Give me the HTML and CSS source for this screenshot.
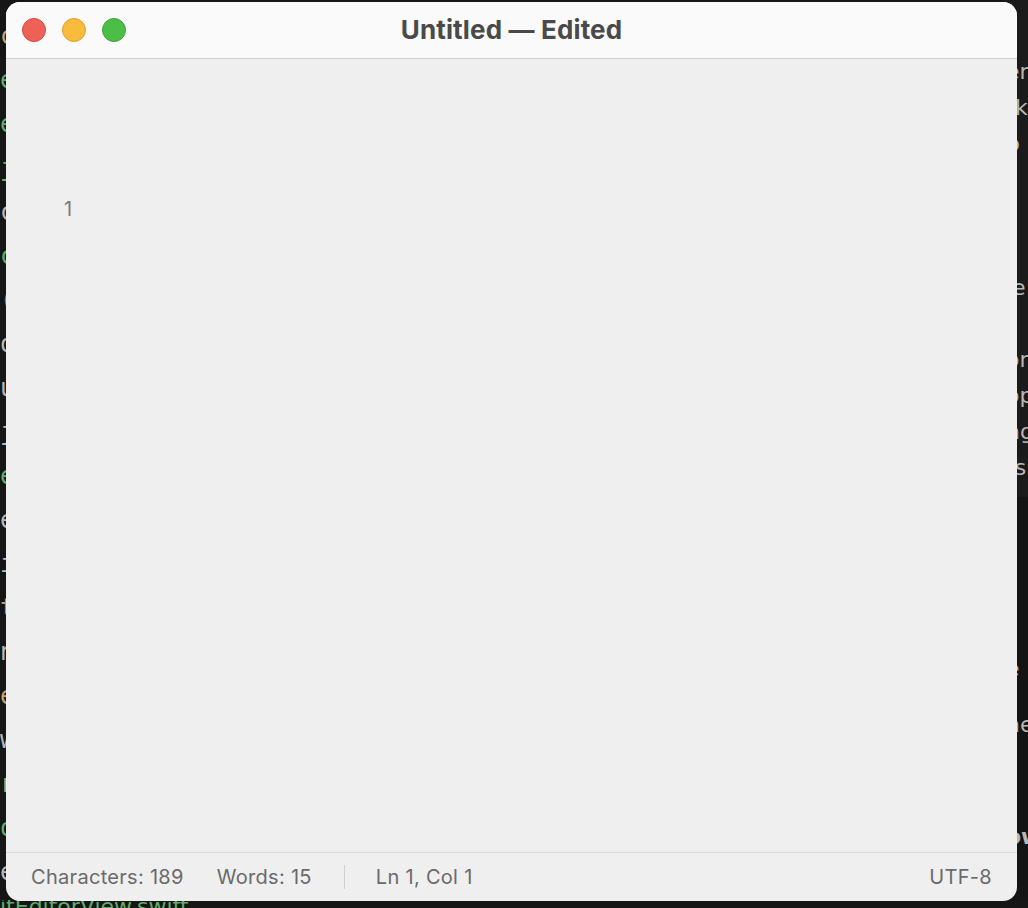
FILE: index.html
```html
<!DOCTYPE html>
<html>
<head>
<meta charset="utf-8">
<title>Untitled — Edited</title>
<link rel="stylesheet" href="styles.css">
</head>
<body>
<div class="desk">
  <div class="code-left">
    <div class="ln tan">c</div>
    <div class="ln green">e</div>
    <div class="ln green">e</div>
    <div class="ln green">j</div>
    <div class="ln gray">c</div>
    <div class="ln green">c</div>
    <div class="ln green">(</div>
    <div class="ln gray">o</div>
    <div class="ln gray">u</div>
    <div class="ln gray">j</div>
    <div class="ln green">e</div>
    <div class="ln gray">e</div>
    <div class="ln gray">i</div>
    <div class="ln tan">t</div>
    <div class="ln gray">n</div>
    <div class="ln tan">e</div>
    <div class="ln gray">w</div>
    <div class="ln tan">r</div>
    <div class="ln green">o</div>
    <div class="ln gray">e</div>
  </div>
  <div class="code-mid"></div>
  <div class="code-right">
    <div class="pane-top">
      <div class="rl gray">er</div>
      <div class="rl gray">rk</div>
      <div class="rl gray">p</div>
      <div class="rl gray">l</div>
      <div class="rl gray"> </div>
      <div class="rl blue bold">t</div>
      <div class="rl gray">le</div>
      <div class="rl gray">t</div>
      <div class="rl gray">or</div>
      <div class="rl gray">op</div>
      <div class="rl gray">ng</div>
      <div class="rl gray">ts</div>
    </div>
    <div class="pane-bottom">
      <div class="rl gray">e</div>
      <div class="rl gray">ne</div>
      <div class="rl gray">(</div>
      <div class="rl gray bold">ow</div>
    </div>
  </div>
</div>
<div class="bottom-strip">
  <span class="green">itEditorView.swift</span>
</div>

<div class="window">
  <div class="titlebar">
    <div class="lights">
      <span class="light red"></span>
      <span class="light yellow"></span>
      <span class="light green-l"></span>
    </div>
    <div class="title">Untitled — Edited</div>
  </div>
  <div class="editor">
    <div class="gutter">1</div>
  </div>
  <div class="statusbar">
    <span class="stat">Characters: 189</span>
    <span class="stat">Words: 15</span>
    <span class="sep"></span>
    <span class="stat">Ln 1, Col 1</span>
    <span class="spacer"></span>
    <span class="stat">UTF-8</span>
  </div>
</div>
</body>
</html>
```

FILE: styles.css
```css
html, body {
  margin: 0;
  padding: 0;
}
body {
  width: 1028px;
  height: 908px;
  background: #161616;
  position: relative;
  overflow: hidden;
  font-family: Inter, "Liberation Sans", sans-serif;
}
.desk {
  display: flex;
  height: 900px;
}
.code-left {
  width: 14px;
  overflow: hidden;
  padding-top: 14px;
  font-family: "DejaVu Sans Mono", monospace;
  font-size: 24px;
  line-height: 44px;
}
.code-left .ln {
  height: 44px;
}
.code-mid {
  flex: 1;
}
.code-right {
  width: 22px;
  display: flex;
  flex-direction: column;
  font-family: "DejaVu Sans", sans-serif;
  font-size: 22px;
}
.pane-top {
  background: #1b1b1b;
  padding-top: 54px;
  height: 443px;
  margin-left: -4px;
  padding-left: 4px;
  overflow: hidden;
}
.pane-bottom {
  flex: 1;
  background: #141414;
  padding-top: 144px;
  overflow: hidden;
  margin-left: -4px;
  padding-left: 4px;
}
.rl {
  height: 36px;
  line-height: 36px;
  white-space: pre;
}
.pane-bottom .rl {
  height: 56px;
  line-height: 56px;
}
.bold { font-weight: bold; }
.green { color: #5fae6a; }
.tan { color: #c7a36d; }
.gray { color: #b8b8b8; }
.blue { color: #4f8fd6; }
.bottom-strip {
  height: 8px;
  overflow: hidden;
  font-family: "DejaVu Sans", sans-serif;
  font-size: 22px;
  line-height: 14px;
}

.window {
  position: absolute;
  left: 6px;
  top: 2px;
  width: 1011px;
  height: 899px;
  border-radius: 14px;
  overflow: hidden;
  background: #efefef;
  display: flex;
  flex-direction: column;
}
.titlebar {
  height: 56px;
  flex: none;
  background: #fafafa;
  border-bottom: 1px solid #cdcdcd;
  position: relative;
  display: flex;
  align-items: center;
  justify-content: center;
}
.lights {
  position: absolute;
  left: 16px;
  top: 16px;
  display: flex;
  gap: 16px;
}
.light {
  width: 24px;
  height: 24px;
  border-radius: 50%;
  box-sizing: border-box;
}
.red { background: #ee6156; border: 1px solid #d9473e; }
.yellow { background: #f7bc3b; border: 1px solid #dea02b; }
.green-l { background: #4cbe47; border: 1px solid #3ba437; }
.title {
  font-size: 26px;
  font-weight: 700;
  color: #4a4a4a;
  letter-spacing: 0.15px;
  margin-top: -2px;
}
.editor {
  flex: 1;
  padding-top: 138px;
  padding-left: 58px;
}
.gutter {
  font-size: 20px;
  color: #7b7b7b;
  line-height: 24px;
}
.statusbar {
  height: 48px;
  flex: none;
  border-top: 1px solid #d9d9d9;
  display: flex;
  align-items: center;
  padding: 0 25px;
  font-size: 20px;
  letter-spacing: 0.3px;
  color: #6a6a6a;
}
.stat + .stat {
  margin-left: 33px;
}
.sep {
  width: 1px;
  height: 24px;
  background: #cfcfcf;
  margin: 0 31px 0 32px;
}
.spacer {
  flex: 1;
}
```
